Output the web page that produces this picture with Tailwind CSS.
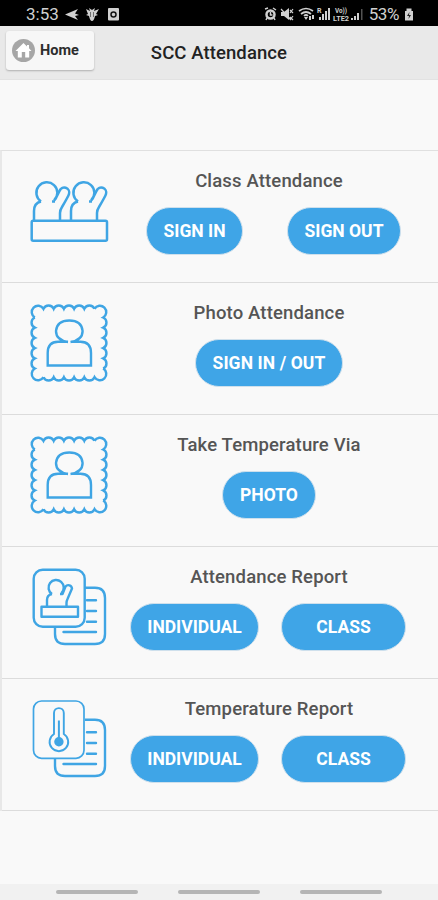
<!DOCTYPE html>
<html lang="en"><head><meta charset="utf-8"><title>SCC Attendance</title>
<script src="https://cdn.jsdelivr.net/npm/@tailwindcss/browser@4"></script></head>
<body class="w-[438px] h-[900px] overflow-hidden bg-[#f9f9f9] flex flex-col font-['Roboto',sans-serif]">
<svg width="0" height="0" class="absolute" aria-hidden="true"><defs>
<g id="pupil"><path d="M41 50.500Q34 52 34 60V69.500M41 50.500A10.500 10.500 0 1 1 54 49.500M55.500 48L59.500 40A4.900 4.900 0 0 1 69 43Q68.500 45 62 56Q60 59 60 62V69.500M52 50.500h3"/></g>
<path id="edge" d="M-33.500-25A6.200 6.200 0 1 1-25-33.500A5.500 5.500 0 0 1-15-33.500A5.500 5.500 0 0 1-5-33.500A5.500 5.500 0 0 1 5-33.500A5.500 5.500 0 0 1 15-33.500A5.500 5.500 0 0 1 25-33.500"/>
<g id="stamp"><g transform="translate(69 60) scale(1.020)"><use href="#edge"/><use href="#edge" transform="rotate(90)"/><use href="#edge" transform="rotate(180)"/><use href="#edge" transform="rotate(270)"/></g><path d="M68 59Q56 57 56 48Q57 37.500 69.300 37.500T82.600 48Q82.600 57 70.500 59M68 58.700H58Q47.700 58.700 47.700 70V82.500H91V70Q91 58.700 80.500 58.700H71"/></g>
<g id="sheet"><path d="M85 40.700H95Q105 40.700 105 51V87Q105 97 95 97H65Q55 97 55 87V80"/><path d="M87 53.300h9M87 64h9M87 74.700h9M63.500 85h32.500" stroke-linecap="round"/></g>
</defs></svg>

<div class="h-[26px] shrink-0 bg-black flex items-center justify-between text-[#d0d0d0] pl-[26px] pr-[24px] pt-[2px]">
  <div class="flex items-center">
    <span class="text-[17px] leading-none w-[39px]">3:53</span>
    <svg width="54" height="16" viewBox="65 5 54 16" fill="currentColor"><path d="M65 13.500L78 8L75 12.500L79 14L75 15L78 19Z"/><path d="M86 8l4 2-1-3 3 2 3-2-1 3 5-2-3 5 2 1-3 1q-1 5-3 5t-3-5l-3-1 2-1z"/><path d="M90.500 11v5M93.500 11v5" stroke="#555" stroke-width=".8"/><rect x="108" y="7" width="11" height="12.500" rx="1"/><circle cx="113.500" cy="13.500" r="2.500" fill="none" stroke="#111" stroke-width="1.500"/></svg>
  </div>
  <div class="flex items-center gap-[5px]">
    <svg width="100" height="16" viewBox="265 5 100 16" fill="currentColor"><circle cx="271.500" cy="13.500" r="4" fill="none" stroke="currentColor" stroke-width="2.500"/><path d="M266 8l3-1M274 7l3 2M271.500 11v3h2M267 19l1-2M276 19l-1-2" fill="none" stroke="currentColor" stroke-width="1.500"/><path d="M282 11h3l5-4v12l-5-4h-3z"/><path d="M282 8l10 11M291 9l3 3M294 8l-3 4M291 16l3 3M294 15l-3 4" stroke="currentColor" stroke-width="1.200"/><path d="M300 10q7-5 14 0M302 13q5-4 10 0M305 15q2-2 4 0" fill="none" stroke="currentColor" stroke-width="1.700"/><path d="M305 16h4l-2 3zM310 15h2v4h-2zM313 14h2v4h-2z"/><text x="318" y="12" font-size="7" font-weight="700">R</text><path d="M320 16h2v3h-2zM323 13h2v6h-2zM326 10h2v9h-2zM329 7h2v12h-2z"/><text x="336" y="12" font-size="7" font-weight="700" textLength="12" lengthAdjust="spacingAndGlyphs">Vo))</text><text x="334" y="19.500" font-size="7" font-weight="700" textLength="16" lengthAdjust="spacingAndGlyphs">LTE2</text><path d="M352 17h2v2h-2zM355 15h2v4h-2zM358 12h2v7h-2z"/><path d="M362 8h1.500v11h-1.500z" opacity=".4"/></svg>
    <span class="text-[17px] leading-none tracking-[-0.4px]">53%</span>
    <svg width="10" height="14" viewBox="0 0 10 14" fill="currentColor"><path d="M1 4h1.500V1.500h5V4H9v9.500H1z"/><path d="M5.500 5L3 9h2l-.5 3L7 8H5z" fill="#222"/></svg>
  </div>
</div>

<header class="h-[54px] shrink-0 bg-[#e9e9e9] border-b border-[#e2e2e2] grid grid-cols-[145px_1fr_145px] items-start">
  <button class="ml-[6px] mt-[5px] w-[88px] h-[39px] rounded-[3px] bg-[#f7f7f7] shadow-[0_1px_2px_rgba(0,0,0,0.25)] flex items-center pl-[6px] gap-[5px]">
    <svg width="23" height="23" viewBox="0 0 23 23"><circle cx="11.500" cy="11.500" r="11.500" fill="#a6a6a6"/><path d="M11.500 4L3.500 12h2.300v6.500h4V13h3.400v5.500h4V12h2.300L17 9.300V6h-2v1.500z" fill="#fff"/></svg>
    <span class="text-[14.500px] font-bold text-[#2d2d2d]">Home</span>
  </button>
  <h1 class="text-center text-[18.500px] leading-[22px] tracking-[0.1px] pt-[16px] font-medium text-[#222] whitespace-nowrap">SCC Attendance</h1>
</header>

<main class="mt-[70px] border-t border-l-2 border-[#e0e0e0] border-l-[#e8e8e8] shrink-0">
  <section class="h-[132px] border-b border-[#dcdcdc] flex">
    <svg class="shrink-0" width="98" height="131" viewBox="2 0 98 131" overflow="visible" fill="none" stroke="#3fa5e4" stroke-width="2.500" stroke-linejoin="round"><use href="#pupil"/><use href="#pupil" x="37"/><rect x="31.700" y="69.700" width="75.300" height="20" rx="1.500"/></svg>
    <div class="flex-1">
      <h2 class="mt-[19px] text-center text-[18.500px] leading-[22px] tracking-[0.15px] font-medium text-[#555]">Class Attendance</h2>
      <div class="mt-[15px] ml-[46px] flex gap-[44px]">
        <button class="w-[97px] h-[48px] rounded-full border-[1.500px] border-[#cfe0ec] bg-[#3fa5e7] text-white text-[17.500px] font-bold whitespace-nowrap">SIGN IN</button>
        <button class="w-[114px] h-[48px] rounded-full border-[1.500px] border-[#cfe0ec] bg-[#3fa5e7] text-white text-[17.500px] font-bold whitespace-nowrap">SIGN OUT</button>
      </div>
    </div>
  </section>
  <section class="h-[132px] border-b border-[#dcdcdc] flex">
    <svg class="shrink-0" width="98" height="131" viewBox="2 0 98 131" overflow="visible" fill="none" stroke="#3fa5e4" stroke-width="2.400"><use href="#stamp"/></svg>
    <div class="flex-1">
      <h2 class="mt-[19px] text-center text-[18.500px] leading-[22px] tracking-[0.15px] font-medium text-[#555]">Photo Attendance</h2>
      <div class="mt-[15px] flex justify-center">
        <button class="w-[148px] h-[48px] rounded-full border-[1.500px] border-[#cfe0ec] bg-[#3fa5e7] text-white text-[17.500px] tracking-[0.1px] font-bold whitespace-nowrap">SIGN IN / OUT</button>
      </div>
    </div>
  </section>
  <section class="h-[132px] border-b border-[#dcdcdc] flex">
    <svg class="shrink-0" width="98" height="131" viewBox="2 0 98 131" overflow="visible" fill="none" stroke="#3fa5e4" stroke-width="2.400"><use href="#stamp"/></svg>
    <div class="flex-1">
      <h2 class="mt-[19px] text-center text-[18.500px] leading-[22px] tracking-[0.15px] font-medium text-[#555]">Take Temperature Via</h2>
      <div class="mt-[15px] flex justify-center">
        <button class="w-[94px] h-[48px] rounded-full border-[1.500px] border-[#cfe0ec] bg-[#3fa5e7] text-white text-[17.500px] font-bold whitespace-nowrap">PHOTO</button>
      </div>
    </div>
  </section>
  <section class="h-[132px] border-b border-[#dcdcdc] flex">
    <svg class="shrink-0" width="98" height="131" viewBox="2 0 98 131" overflow="visible" fill="none" stroke="#3fa5e4" stroke-width="2.400" stroke-linejoin="round"><use href="#sheet"/><rect x="33.700" y="22.700" width="51" height="57" rx="9"/><path d="M52 47Q47 48 47 53V59.500M52 47A7.600 7.600 0 1 1 61.500 46M60 47h2.500L65.500 39.500A3.700 3.700 0 0 1 72 41.500L67.500 52Q66.500 54 66.500 56V59.500"/><rect x="41.500" y="59.700" width="36.500" height="10"/></svg>
    <div class="flex-1">
      <h2 class="mt-[19px] text-center text-[18.500px] leading-[22px] tracking-[0.15px] font-medium text-[#555]">Attendance Report</h2>
      <div class="mt-[15px] ml-[30px] flex gap-[22px]">
        <button class="w-[129px] h-[48px] rounded-full border-[1.500px] border-[#cfe0ec] bg-[#3fa5e7] text-white text-[17.500px] font-bold whitespace-nowrap">INDIVIDUAL</button>
        <button class="w-[125px] h-[48px] rounded-full border-[1.500px] border-[#cfe0ec] bg-[#3fa5e7] text-white text-[17.500px] font-bold whitespace-nowrap">CLASS</button>
      </div>
    </div>
  </section>
  <section class="h-[132px] border-b border-[#dcdcdc] flex">
    <svg class="shrink-0" width="98" height="131" viewBox="2 0 98 131" overflow="visible" fill="none" stroke="#3fa5e4" stroke-width="2.400"><use href="#sheet"/><rect x="33.500" y="22" width="50.500" height="57.300" rx="8" stroke-width="1.700"/><path d="M54 55V34A4.900 4.900 0 0 1 63.800 34V55A9.300 9.300 0 1 1 54 55Z" stroke-width="1.900"/><path d="M58.900 41.500V61" stroke-width="2"/><circle cx="58.900" cy="62.700" r="4.700" fill="#3fa5e4" stroke="none"/></svg>
    <div class="flex-1">
      <h2 class="mt-[19px] text-center text-[18.500px] leading-[22px] tracking-[0.15px] font-medium text-[#555]">Temperature Report</h2>
      <div class="mt-[15px] ml-[30px] flex gap-[22px]">
        <button class="w-[129px] h-[48px] rounded-full border-[1.500px] border-[#cfe0ec] bg-[#3fa5e7] text-white text-[17.500px] font-bold whitespace-nowrap">INDIVIDUAL</button>
        <button class="w-[125px] h-[48px] rounded-full border-[1.500px] border-[#cfe0ec] bg-[#3fa5e7] text-white text-[17.500px] font-bold whitespace-nowrap">CLASS</button>
      </div>
    </div>
  </section>
</main>

<nav class="mt-auto h-[16px] shrink-0 bg-[#f1f1f1] flex gap-[40px] pl-[56px] pt-[6px]">
  <div class="w-[82px] h-[4px] rounded-full bg-[#b5b5b5]"></div>
  <div class="w-[82px] h-[4px] rounded-full bg-[#b5b5b5]"></div>
  <div class="w-[82px] h-[4px] rounded-full bg-[#b5b5b5]"></div>
</nav>
</body></html>
